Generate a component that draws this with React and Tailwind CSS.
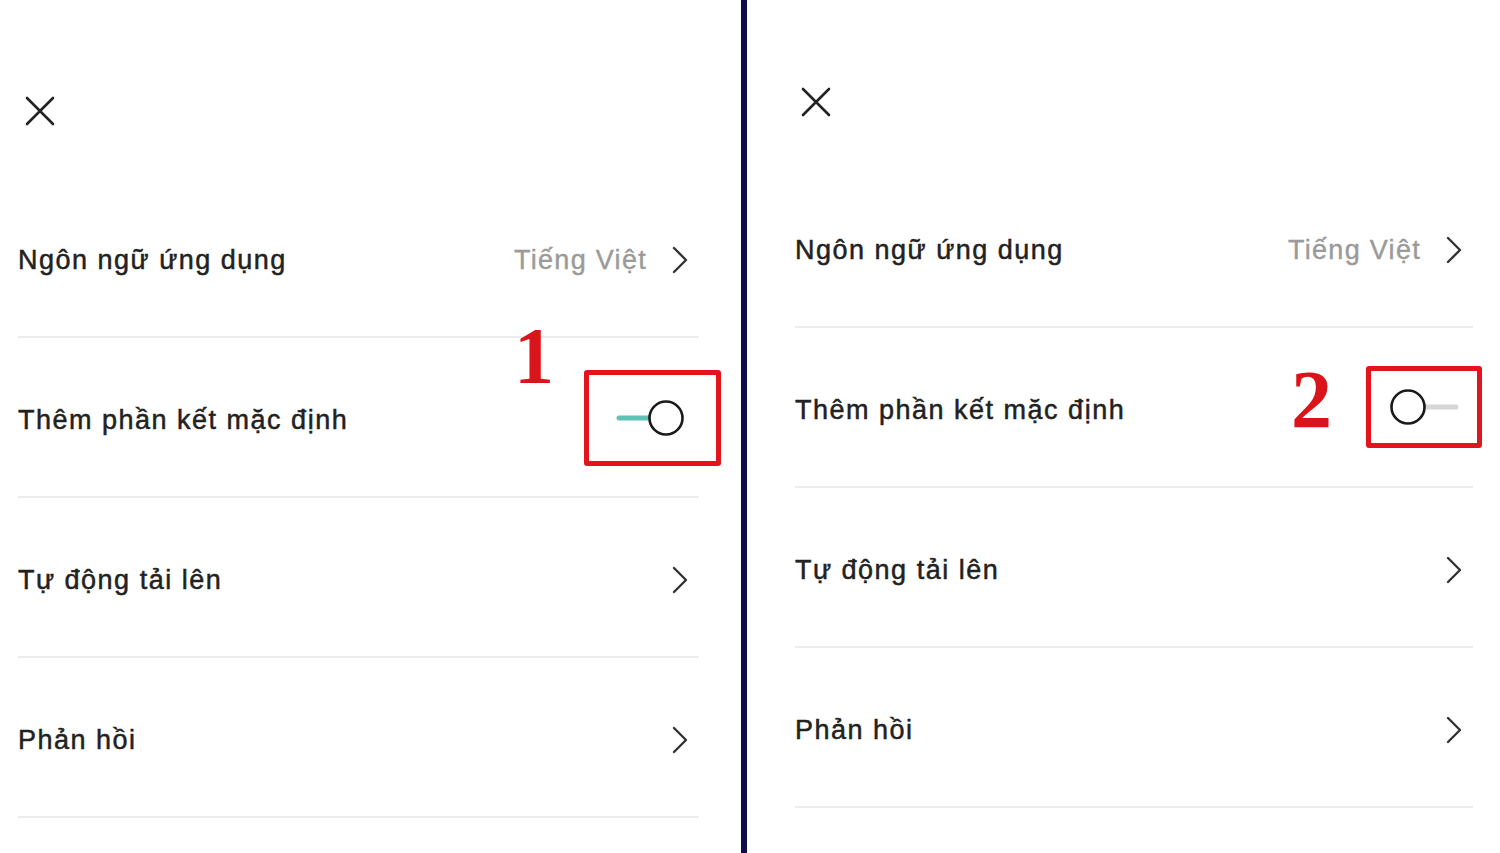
import React from 'react';

const font = { fontFamily: '"Liberation Sans", Arial, sans-serif' };

function CloseIcon() {
    return (
        <svg width="30" height="30" viewBox="0 0 30 30" fill="none" stroke="#222" strokeWidth="2.6" strokeLinecap="round">
            <path d="M2 2 L28 28 M28 2 L2 28" />
        </svg>
    );
}

function Chevron() {
    return (
        <svg width="18" height="28" viewBox="0 0 18 28" fill="none" stroke="#333" strokeWidth="2.4" strokeLinecap="round" strokeLinejoin="round">
            <path d="M3 2 L15 14 L3 26" />
        </svg>
    );
}

function Toggle({ on }) {
    return (
        <svg width="70" height="40" viewBox="0 0 70 40" fill="none">
            {on ? (
                <>
                    <line x1="3" y1="20" x2="34" y2="20" stroke="#5fc2b4" strokeWidth="5" strokeLinecap="round" />
                    <circle cx="50" cy="20" r="16.5" stroke="#1a1a1a" strokeWidth="2.6" fill="white" />
                </>
            ) : (
                <>
                    <line x1="34" y1="20" x2="67" y2="20" stroke="#d6d6d6" strokeWidth="5" strokeLinecap="round" />
                    <circle cx="19" cy="20" r="16.5" stroke="#1a1a1a" strokeWidth="2.6" fill="white" />
                </>
            )}
        </svg>
    );
}

function Row({ label, value, arrow, children }) {
    return (
        <div className="relative flex h-[160px] items-center justify-between border-b-2 border-[#ececec] pt-[6px]">
            <span className="text-[27px] tracking-[1.5px] text-[#222] [-webkit-text-stroke:0.5px_#222]">{label}</span>
            <div className="flex items-center gap-[24px] pr-[10px]">
                {value && <span className="text-[27px] tracking-[1.3px] text-[#9a9a9a] [-webkit-text-stroke:0.4px_#9a9a9a]">{value}</span>}
                {arrow && <Chevron />}
            </div>
            {children}
        </div>
    );
}

function Panel({ side }) {
    const left = side === 'left';
    return (
        <div className={left ? 'w-[741px] pl-[18px] pr-[42px]' : 'flex-1 pl-[48px] pr-[27px]'}>
            <div className={left ? 'flex h-[178px] items-start pt-[96px] pl-[7px]' : 'flex h-[168px] items-start pt-[87px] pl-[6px]'}>
                <CloseIcon />
            </div>
            <Row label="Ngôn ngữ ứng dụng" value="Tiếng Việt" arrow />
            <Row label="Thêm phần kết mặc định">
                {left ? (
                    <>
                        <span className="absolute left-[496px] top-[-22px] text-[80px] font-bold leading-none text-[#d9141b]" style={{ fontFamily: '"Liberation Serif", "Times New Roman", serif' }}>1</span>
                        <div className="absolute left-[566px] top-[32px] flex h-[96px] w-[137px] items-center justify-center border-[5px] border-[#e3141c] rounded-[3px]">
                            <div className="pr-[4px]"><Toggle on /></div>
                        </div>
                    </>
                ) : (
                    <>
                        <span className="absolute left-[496px] top-[31px] text-[82px] font-bold leading-none text-[#d9141b]" style={{ fontFamily: '"Liberation Serif", "Times New Roman", serif' }}>2</span>
                        <div className="absolute left-[571px] top-[38px] flex h-[82px] w-[116px] items-center justify-center border-[5px] border-[#e3141c] rounded-[3px]">
                            <Toggle />
                        </div>
                    </>
                )}
            </Row>
            <Row label="Tự động tải lên" arrow />
            <Row label="Phản hồi" arrow />
        </div>
    );
}

export default function App() {
    return (
        <div className="flex h-[853px] w-[1500px] overflow-hidden bg-white" style={font}>
            <Panel side="left" />
            <div className="w-[6px] bg-[#0c0c4e]" />
            <Panel side="right" />
        </div>
    );
}
